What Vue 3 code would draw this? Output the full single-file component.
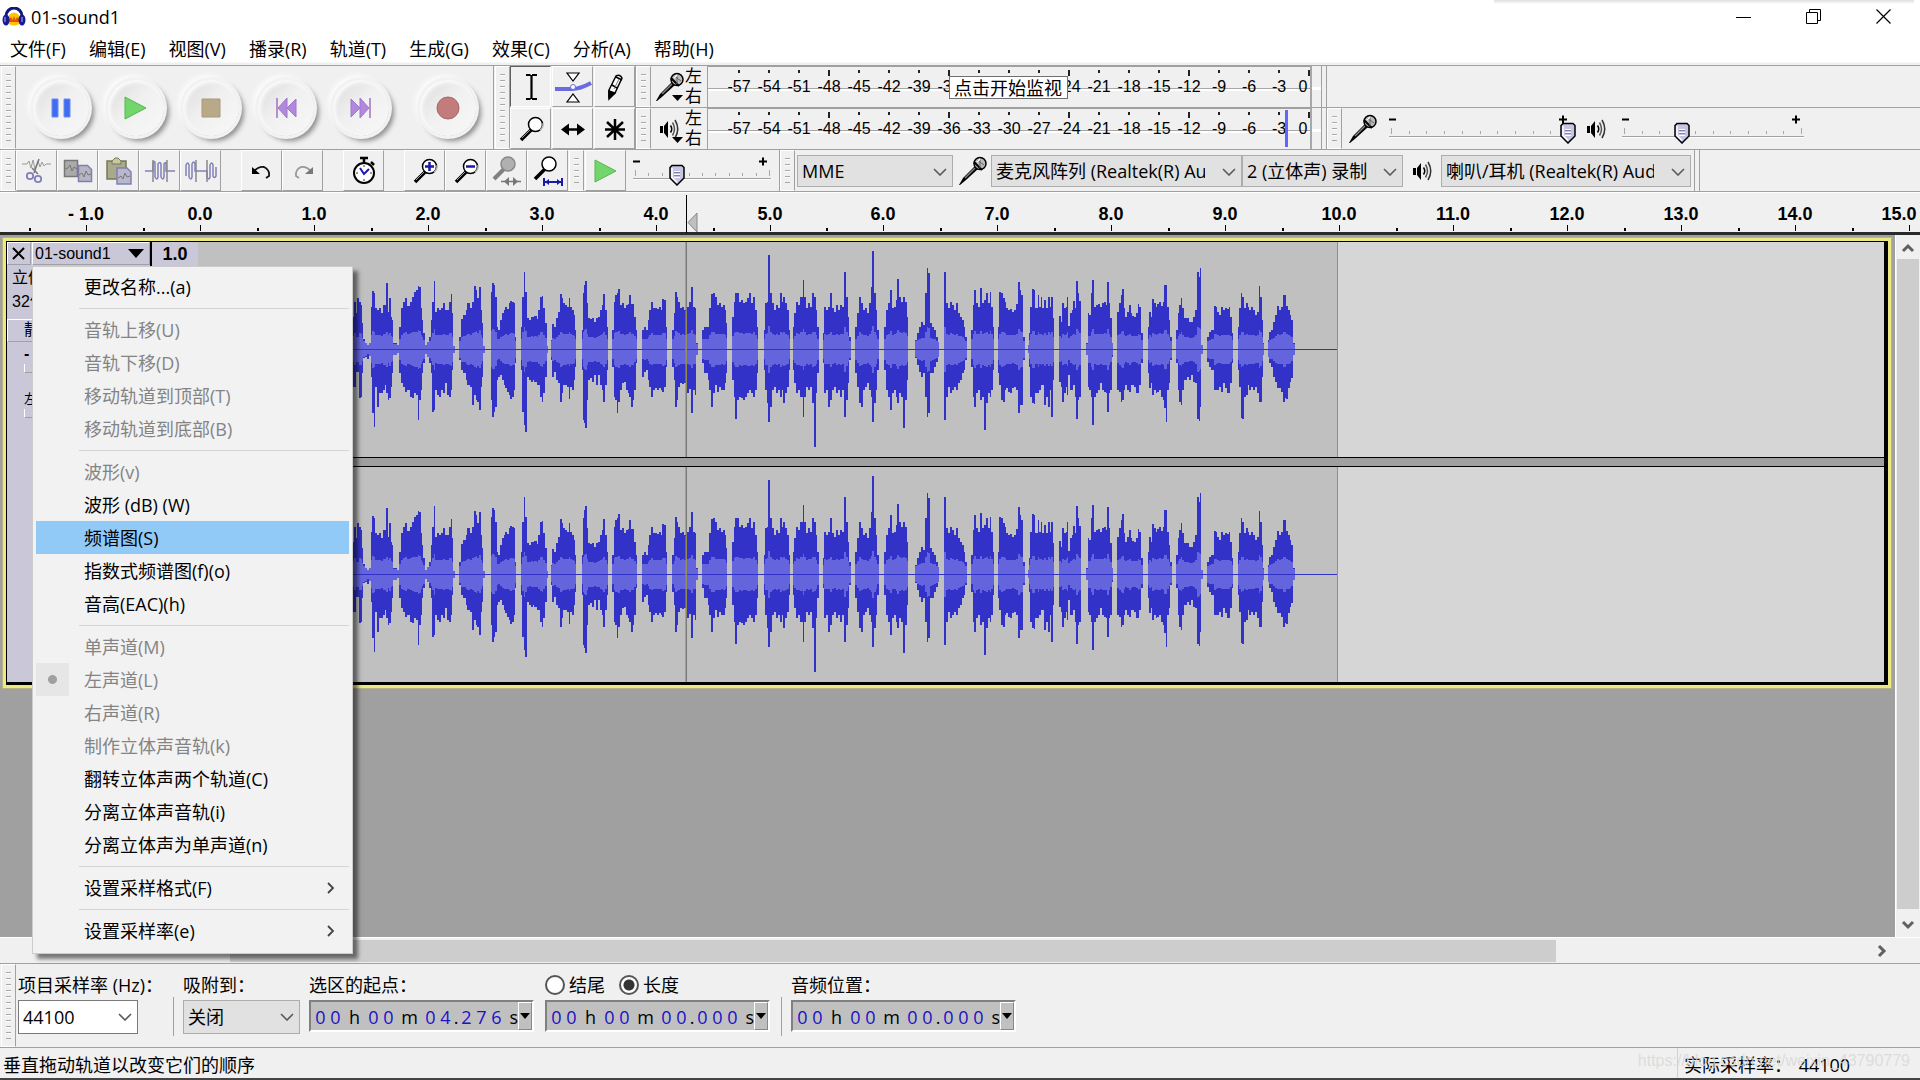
<template>
  <div class="window">
    <svg class="defs" aria-hidden="true">
      <symbol id="mic" viewBox="0 0 30 30">
        <path d="M1 29 L5 22 L17 10 L20 13 L8 24 L2 29z" fill="#000" />
        <path d="M7 22 L17 12" stroke="#888" stroke-width="1.5" />
        <circle cx="22" cy="7.500" r="6" fill="#bbb" stroke="#000" stroke-width="1.5" />
        <path d="M16 6 L24 14" stroke="#000" stroke-width="2" />
        <path d="M19 4 L26 9 M22 3 L22 12" stroke="#666" stroke-width="1" />
        <path d="M19 6 L22 3" stroke="#fff" stroke-width="1.5" />
      </symbol>
      <symbol id="speaker" viewBox="0 0 20 20">
        <path d="M1 7h3v7H1z M5 7l4-5v17l-4-5z" fill="#000" />
        <path d="M11.500 6.500q2.500 3.500 0 7" fill="none" stroke="#000" stroke-width="1.500" />
        <path d="M13.500 3.500q4 6.500 0 13" fill="none" stroke="#555" stroke-width="1.500" />
        <path d="M16 1q5.500 9 0 18" fill="none" stroke="#333" stroke-width="1.500" />
      </symbol>
      <symbol id="thumb" viewBox="0 0 18 22">
        <path d="M4 1.500h10l2 2v10.500l-7 7l-7-7v-10.500z" fill="#c6c6e4" stroke="#000" stroke-width="1.500" />
        <path d="M4 4v9.500l5 5" fill="none" stroke="#fff" stroke-width="1.500" />
        <path d="M6 7.500h6M6 10.500h6M6 13.500h6" stroke="#fff" />
        <path d="M6 8.500h6M6 11.500h6" stroke="#8080a8" />
      </symbol>
      <symbol id="lens" viewBox="0 0 28 28">
        <path d="M4 25l11-11" stroke="#000" stroke-width="3.500" />
        <path d="M5 23l8-8" stroke="#999" stroke-width="1" />
        <circle cx="18.500" cy="9.500" r="7" fill="#fff" stroke="#000" stroke-width="1.500" />
        <path d="M23 15a7 7 0 0 0 3-7" fill="none" stroke="#bbb" stroke-width="1.500" />
      </symbol>
      <symbol id="chevron" viewBox="0 0 14 8">
        <path d="M1 1l6 6l6-6" fill="none" stroke="#5a5a5a" stroke-width="1.600" />
      </symbol>
      <symbol id="play" viewBox="0 0 24 24">
        <path d="M1 1l21 11l-21 11z" fill="#72d66b" stroke="#5ab455" stroke-width="1" />
      </symbol>
    </svg>

    <header class="titlebar">
      <svg class="logo" width="24" height="20" viewBox="0 0 24 20">
        <path d="M4 12V9a8 8 0 0 1 16 0v3" fill="none" stroke="#14147a" stroke-width="3" />
        <path d="M7 8q5-5 10 0v9q-5 3-10 0z" fill="#ffc400" />
        <path d="M7 12l2-2 1.500 3L12 9l1.500 4L15 10l2 2v3H7z" fill="#f04a10" />
        <ellipse cx="4" cy="13" rx="3.500" ry="5.500" fill="#1a1a90" />
        <ellipse cx="20" cy="13" rx="3.500" ry="5.500" fill="#1a1a90" />
        <path d="M3 10v5M20 10v5" stroke="#7c7ce8" stroke-width="1.500" />
      </svg>
      <h1>01-sound1</h1>
      <div class="edge-shadow"></div>
      <div class="window-buttons">
        <button aria-label="最小化">
          <svg width="16" height="16"><path d="M0 8.500h15" stroke="#000" /></svg>
        </button>
        <button aria-label="还原">
          <svg width="16" height="16" fill="none" stroke="#000"><path d="M.500 3.500h11v11h-11zM3.500 3.500v-3h11v11h-3" /></svg>
        </button>
        <button aria-label="关闭窗口">
          <svg width="16" height="16"><path d="M.500.500l14 14M14.500.500l-14 14" stroke="#000" stroke-width="1.200" /></svg>
        </button>
      </div>
    </header>

    <nav class="menubar">
      <button v-for="item in mainMenu" :key="item">{{ item }}</button>
    </nav>

    <div class="dock">
      <div class="dock-upper">
        <section class="toolbar transport">
          <div class="grip"></div>
          <div class="transport-buttons">
            <button aria-label="暂停">
              <svg width="24" height="24"><path d="M3 3h6v18H3zM15 3h6v18h-6z" fill="#3f6cf0" stroke="#6a8cf4" /></svg>
            </button>
            <button aria-label="播放"><svg width="24" height="24"><use href="#play" /></svg></button>
            <button aria-label="停止">
              <svg width="24" height="24"><path d="M3 3h18v18H3z" fill="#b8a988" stroke="#a99a78" /></svg>
            </button>
            <button aria-label="跳到开头">
              <svg width="24" height="24"><path d="M3 2v20" stroke="#a070c8" stroke-width="1.500" /><path d="M13 2v20L4 12zM22 3v18l-9-9z" fill="#b088dc" stroke="#a076cc" /></svg>
            </button>
            <button aria-label="跳到结尾">
              <svg width="24" height="24"><path d="M21 2v20" stroke="#a070c8" stroke-width="1.500" /><path d="M11 2v20l9-10zM2 3v18l9-9z" fill="#b088dc" stroke="#a076cc" /></svg>
            </button>
            <button class="record" aria-label="录制">
              <svg width="24" height="24"><circle cx="12" cy="12" r="11" fill="#c27c7c" stroke="#a86464" /></svg>
            </button>
          </div>
        </section>

        <section class="toolbar tools">
          <div class="grip"></div>
          <div class="tool-grid">
            <button class="tool pressed" aria-label="选择工具">
              <svg width="28" height="28"><path d="M9 2h4.500M15 2h5M9 26h4.500M15 26h5M14.500 2v24" stroke="#000" stroke-width="2.200" fill="none" /></svg>
            </button>
            <button class="tool" aria-label="包络工具">
              <svg width="38" height="32">
                <path d="M1 18h17q8 0 19-6" fill="none" stroke="#6b6be0" stroke-width="4" />
                <path d="M13 2h12l-6 8zM13 31h12l-6-8z" fill="#fff" stroke="#000" stroke-width="1.200" />
                <circle cx="19" cy="16" r="2.500" fill="#fff" stroke="#6b6be0" />
              </svg>
            </button>
            <button class="tool" aria-label="绘制工具">
              <svg width="28" height="28">
                <path d="M8 17l7-14q4-2 6 2l-7 15-6 4z" fill="#fff" stroke="#000" stroke-width="1.500" />
                <path d="M8 18l6 2-6 6zM15 4l6 3M11 12l5 3" stroke="#000" stroke-width="1.500" fill="#000" />
                <path d="M13 16l5-10" stroke="#777" />
              </svg>
            </button>
            <button class="tool" aria-label="缩放工具"><svg width="28" height="28"><use href="#lens" /></svg></button>
            <button class="tool" aria-label="时间移动工具">
              <svg width="28" height="28"><path d="M6 14.500h16" stroke="#000" stroke-width="2.500" /><path d="M2 14.500l8-6v12zM26 14.500l-8-6v12z" /></svg>
            </button>
            <button class="tool" aria-label="多功能工具">
              <svg width="28" height="28"><path d="M14 4v21M4 14.500h20M6 7l16 15M22 7L6 22" stroke="#000" stroke-width="2.500" /></svg>
            </button>
          </div>
        </section>

        <div class="meter-rows">
          <div class="meter-row" v-for="meter in meters" :key="meter.icon">
            <section class="toolbar meter">
              <div class="grip"></div>
              <button class="meter-menu" :aria-label="meter.label">
                <svg v-if="meter.icon === 'mic'" width="30" height="30"><use href="#mic" /></svg>
                <svg v-else class="meter-speaker" width="20" height="20"><use href="#speaker" /></svg>
                <svg class="arrow" width="12" height="6"><path d="M0 0h11l-5.500 6z" /></svg>
              </button>
              <div class="channels"><span>左</span><span>右</span></div>
              <div class="scale">
                <span v-for="db in dbMarks" :key="db" :class="{ major: db % 12 === 0 }">{{ db }}</span>
                <i v-if="meter.peak" class="peak"></i>
                <div v-if="meter.tip" class="tip">{{ meter.tip }}</div>
              </div>
              <div class="clip-box"></div>
            </section>
            <section v-if="meter.icon === 'speaker'" class="toolbar mixer">
              <div class="grip"></div>
              <template v-for="s in mixerSliders" :key="s.label">
                <svg v-if="s.icon === 'mic'" class="mixer-icon" width="30" height="30"><use href="#mic" /></svg>
                <svg v-else class="mixer-icon narrow" width="20" height="20"><use href="#speaker" /></svg>
                <label class="slider">
                  <svg :width="s.width" height="41">
                    <path d="M9 11.500h7" stroke="#000" stroke-width="2" />
                    <path :d="`M${s.plus - 4} 11.500h8M${s.plus} 7.500v8`" stroke="#000" stroke-width="2" />
                    <path v-for="n in 11" :key="n" :d="tick(s, n)" stroke="#a8a8a8" />
                    <path :d="`M9 28.500H${s.end + 3}`" stroke="#a0a0a0" />
                    <path :d="`M9 29.500H${s.end + 3}`" stroke="#fff" />
                    <use href="#thumb" :x="s.thumb - 9" y="14" width="18" height="22" />
                  </svg>
                  <input type="range" min="0" max="100" :value="s.value" :aria-label="s.label">
                </label>
              </template>
            </section>
          </div>
        </div>
      </div>

      <div class="dock-lower">
        <section class="toolbar edit">
          <div class="grip"></div>
          <button class="tool" aria-label="剪切">
            <svg width="30" height="28" fill="none">
              <path d="M0 7h5l2-3 2 7 2-8 2 9 3-8 2 6 2-5 2 4 2-2h5" stroke="#999" />
              <path d="M17 2l-5 14M10 11l6 6" stroke="#777" stroke-width="1.500" />
              <circle cx="8" cy="19" r="3.200" stroke="#8080b8" stroke-width="1.800" />
              <circle cx="16" cy="22" r="3.200" stroke="#8080b8" stroke-width="1.800" />
            </svg>
          </button>
          <button class="tool" aria-label="复制">
            <svg width="30" height="26">
              <path d="M1.500 2.500h13v16h-13z" fill="#aaa" stroke="#777" stroke-width="1.500" />
              <path d="M2 11l3-1 2-3 2 6 2-4 3 2" stroke="#777" fill="none" />
              <path d="M15.500 7.500h9l4 4v12h-13z" fill="#b5b5c4" stroke="#8080b0" stroke-width="1.500" />
              <path d="M16 17l3-2 2 4 2-6 2 4 3-1" stroke="#777" fill="none" />
            </svg>
          </button>
          <button class="tool" aria-label="粘贴">
            <svg width="28" height="28">
              <path d="M2 4h19v18H2z" fill="#a9a98c" stroke="#77775c" stroke-width="1.500" />
              <path d="M7 7V4l3-3h3l3 3v3z" fill="#c9c9a0" stroke="#77775c" />
              <path d="M12 11h10l4 4v12H12z" fill="#b8b8cc" stroke="#8080b0" stroke-width="1.500" />
              <path d="M13 21l3-2 2 3 2-6 2 4 3-1" stroke="#777" fill="none" />
            </svg>
          </button>
          <button class="tool" aria-label="修剪">
            <svg width="32" height="24" fill="none">
              <path d="M1 12h8v-8q2-3 2 0v14q2 4 3 0V5q2-3 3 0v13q2 4 3 0V5q2-3 2 0v7h9" stroke="#8080b8" stroke-width="1.500" />
              <path d="M9 1v22M23 1v22" stroke="#888" stroke-width="1.500" />
            </svg>
          </button>
          <button class="tool" aria-label="静音">
            <svg width="32" height="24" fill="none">
              <path d="M1 17V6q2-4 3 0v12q2 4 3 0V5q2-4 3 0v7h12v6q2 4 3 0V6q2-4 3 0v11q1 3 3 0V8" stroke="#8080b8" stroke-width="1.500" />
              <path d="M11 1v22M22 1v22" stroke="#888" stroke-width="1.500" />
            </svg>
          </button>
          <i class="spacer"></i>
          <button class="tool" aria-label="撤销">
            <svg width="24" height="20"><path d="M4 10q5-5 10-4 6 3 5 9l-3 2" fill="none" stroke="#111" stroke-width="1.800" /><path d="M2 6v7h8z" /></svg>
          </button>
          <button class="tool" aria-label="重做">
            <svg width="24" height="20"><path d="M20 10q-5-5-10-4-6 3-5 9l3 2" fill="none" stroke="#999" stroke-width="1.800" /><path d="M22 6v7h-8z" fill="#777" /></svg>
          </button>
          <i class="spacer"></i>
          <button class="tool" aria-label="同步锁定">
            <svg width="26" height="30">
              <path d="M13 1v5M9 2h8M20 6l3 3" stroke="#000" stroke-width="2.500" />
              <circle cx="13" cy="17" r="10" fill="#fff" stroke="#000" stroke-width="2" />
              <path d="M13 9v2M13 23v2M5 17h2M19 17h2" stroke="#333" />
              <path d="M9 12l4 6 5-5" fill="none" stroke="#1a1ab0" stroke-width="2" />
            </svg>
          </button>
          <i class="spacer"></i>
          <button class="tool" aria-label="放大">
            <svg width="28" height="28"><use href="#lens" /><path d="M14 9.500h9M18.500 5v9" stroke="#1a1aa8" stroke-width="2.500" /></svg>
          </button>
          <button class="tool" aria-label="缩小">
            <svg width="28" height="28"><use href="#lens" /><path d="M14 9.500h9" stroke="#1a1aa8" stroke-width="2.500" /></svg>
          </button>
          <button class="tool" aria-label="适应选区">
            <svg width="30" height="32">
              <path d="M2 24l11-11" stroke="#808080" stroke-width="4" />
              <circle cx="16" cy="9" r="7" fill="#b0b0b0" stroke="#888" stroke-width="1.500" />
              <path d="M9 26.500h20" stroke="#777" stroke-width="1.500" />
              <path d="M17 22v9l-5-4.500zM21 22v9l5-4.500z" fill="#777" />
            </svg>
          </button>
          <button class="tool" aria-label="适应项目">
            <svg width="30" height="32">
              <path d="M2 24l11-11" stroke="#000" stroke-width="3.500" />
              <circle cx="16" cy="9" r="7" fill="#fff" stroke="#000" stroke-width="1.500" />
              <path d="M11 27h18M11 23v8M29 23v8" stroke="#1a1aa8" stroke-width="2" />
              <path d="M12 27l4-3v6zM28 27l-4-3v6z" fill="#1a1aa8" />
            </svg>
          </button>
        </section>

        <section class="toolbar play-speed">
          <div class="grip"></div>
          <button class="tool" aria-label="以指定速度播放"><svg width="24" height="24"><use href="#play" /></svg></button>
          <label class="slider">
            <svg :width="speed.width" height="41">
              <path d="M7 11.500h7" stroke="#000" stroke-width="2" />
              <path :d="`M${speed.plus - 4} 11.500h8M${speed.plus} 7.500v8`" stroke="#000" stroke-width="2" />
              <path v-for="n in 11" :key="n" :d="tick(speed, n)" stroke="#a8a8a8" />
              <path :d="`M7 28.500H${speed.end + 2}`" stroke="#a0a0a0" />
              <path :d="`M7 29.500H${speed.end + 2}`" stroke="#fff" />
              <use href="#thumb" :x="speed.thumb - 9" y="14" width="18" height="22" />
            </svg>
            <input type="range" min="0" max="100" :value="speed.value" :aria-label="speed.label">
          </label>
        </section>

        <section class="toolbar devices">
          <div class="grip"></div>
          <span class="combo host">
            <select aria-label="音频主机"><option>MME</option></select>
            <svg width="14" height="8"><use href="#chevron" /></svg>
          </span>
          <svg class="device-icon" width="30" height="30"><use href="#mic" /></svg>
          <span class="combo input-device">
            <select aria-label="录制设备"><option>麦克风阵列 (Realtek(R) Audio)</option></select>
            <svg width="14" height="8"><use href="#chevron" /></svg>
          </span>
          <span class="combo input-channels">
            <select aria-label="录制声道"><option>2 (立体声) 录制</option></select>
            <svg width="14" height="8"><use href="#chevron" /></svg>
          </span>
          <svg class="device-icon narrow" width="20" height="20"><use href="#speaker" /></svg>
          <span class="combo output-device">
            <select aria-label="播放设备"><option>喇叭/耳机 (Realtek(R) Audio)</option></select>
            <svg width="14" height="8"><use href="#chevron" /></svg>
          </span>
        </section>
      </div>
    </div>

    <div class="timeline">
      <svg width="100%" height="40">
        <g v-for="mark in timeMarks" :key="mark.x">
          <rect :x="mark.x" :y="mark.label ? 32 : 35" :width="mark.label ? 1 : 2" :height="mark.label ? 6 : 3" fill="#000" />
          <text v-if="mark.label" :x="mark.textX" y="27">{{ mark.label }}</text>
        </g>
        <path d="M686.500 2v38" stroke="#000" />
        <path d="M697 20v19l-9-9.500z" fill="#c0c0c0" stroke="#888" />
      </svg>
    </div>

    <main class="workspace">
      <div class="track-area">
        <article class="track">
          <div class="track-body">
            <aside class="track-panel">
              <div class="track-head">
                <button class="close" aria-label="关闭轨道">
                  <svg width="14" height="14"><path d="M1 1l11 11M12 1L1 12" stroke="#000" stroke-width="2" /></svg>
                </button>
                <button class="name">01-sound1 <svg width="16" height="9"><path d="M0 0h16l-8 9z" /></svg></button>
              </div>
              <p class="format">立体声<br>32位浮点</p>
              <div class="mute"><button>静音</button></div>
              <div class="gain"><span>-</span><i></i></div>
              <div class="gain pan"><span>左</span><i></i></div>
            </aside>
            <div class="v-ruler"><span>1.0</span></div>
            <div class="waves">
              <div v-for="channel in 2" :key="channel" class="channel">
                <svg width="1139" height="215" viewBox="594 36 3417 645">
                  <path :d="peakPath" fill="#3232c8" shape-rendering="crispEdges" />
                  <path :d="rmsPath" fill="#6464dc" shape-rendering="crispEdges" />
                  <rect x="594" y="357" width="3417" height="3" fill="#3232c8" />
                  <rect x="2057" y="36" width="3" height="645" fill="#5a5a5a" />
                  <rect x="2057" y="243" width="3" height="237" fill="#b4aa3c" />
                  <rect x="2057" y="315" width="3" height="87" fill="#8c8c64" />
                </svg>
              </div>
            </div>
          </div>
        </article>
      </div>
      <div class="v-scroll">
        <svg width="14" height="12"><path d="M2 9l5-5l5 5" fill="none" stroke="#606060" stroke-width="3" /></svg>
        <i></i>
        <svg width="14" height="12"><path d="M2 3l5 5l5-5" fill="none" stroke="#606060" stroke-width="3" /></svg>
      </div>
    </main>
    <div class="h-scroll">
      <i></i>
      <svg width="12" height="14"><path d="M3 2l5 5l-5 5" fill="none" stroke="#606060" stroke-width="3" /></svg>
    </div>

    <section class="selection-bar">
      <div class="grip"></div>
      <div class="field rate">
        <label for="rate">项目采样率 (Hz)：</label>
        <span class="combo editable">
          <input id="rate" type="text" value="44100">
          <svg width="14" height="8"><use href="#chevron" /></svg>
        </span>
      </div>
      <i class="divider"></i>
      <div class="field snap">
        <label for="snap">吸附到：</label>
        <span class="combo">
          <select id="snap"><option>关闭</option></select>
          <svg width="14" height="8"><use href="#chevron" /></svg>
        </span>
      </div>
      <template v-for="time in timeFields" :key="time.id">
        <i v-if="time.id === 'position'" class="divider"></i>
        <div class="field">
          <div v-if="time.id === 'end'" class="radios">
            <label><input type="radio" name="mode" value="end" v-model="mode">结尾</label>
            <label><input type="radio" name="mode" value="length" v-model="mode">长度</label>
          </div>
          <span v-else class="caption">{{ time.label }}</span>
          <div class="time-control">
            <span v-for="(ch, i) in time.value" :key="i" :class="charClass(ch)">{{ ch }}</span>
            <button :aria-label="time.label + '格式'"><svg width="10" height="6"><path d="M0 0h10l-5 6z" /></svg></button>
          </div>
        </div>
      </template>
    </section>

    <footer class="statusbar">
      <span class="hint">垂直拖动轨道以改变它们的顺序</span>
      <span class="actual-rate">实际采样率： <b>44100</b></span>
      <span class="watermark">https://blog.csdn.net/weixin_43790779</span>
    </footer>

    <div class="track-menu" role="menu">
      <template v-for="(group, g) in trackMenu" :key="g">
        <hr v-if="g > 0">
        <button
          v-for="item in group"
          :key="item.text"
          role="menuitem"
          :disabled="item.off"
          :class="{ active: item.active, checked: item.checked }"
        >
          <span class="mark"></span>{{ item.text }}
          <svg v-if="item.sub" width="8" height="12"><path d="M1 1l5 5l-5 5" fill="none" stroke="#444" stroke-width="1.800" /></svg>
        </button>
      </template>
    </div>
  </div>
</template>

<script setup>
import { ref } from 'vue';

const mainMenu = ['文件(F)', '编辑(E)', '视图(V)', '播录(R)', '轨道(T)', '生成(G)', '效果(C)', '分析(A)', '帮助(H)'];

const meters = [
  { icon: 'mic', label: '录制电平', tip: '点击开始监视' },
  { icon: 'speaker', label: '播放电平', peak: true }
];

const dbMarks = Array.from({ length: 20 }, (_, i) => i * 3 - 57);

const mixerSliders = [
  { icon: 'mic', label: '录制音量', width: 200, start: 11, end: 188, thumb: 188, plus: 183, value: 100 },
  { icon: 'speaker', label: '播放音量', width: 200, start: 11, end: 188, thumb: 69, plus: 183, value: 33 }
];
const speed = { label: '播放速度', width: 153, start: 9, end: 143, thumb: 51, plus: 137, value: 31 };

// The end ticks are a little taller than the inner ones
const tick = (s, n) => {
  const x = Math.round(s.start + ((s.end - s.start) * (n - 1)) / 10) + 0.5;
  return `M${x} ${n === 1 || n === 11 ? 20 : 23}V26`;
};

// One label per second, a small tick on each half second
const timeMarks = [];
for (let t = -1.5; t <= 15; t += 0.5) {
  const x = Math.round(200 + t * 113.9);
  const whole = Number.isInteger(t);
  const text = t < 0 ? '- ' + (-t).toFixed(1) : t.toFixed(1);
  timeMarks.push({ x, label: whole ? text : '', textX: t === 15 ? x - 10 : x });
}

const mode = ref('length');

const timeFields = [
  { id: 'start', label: '选区的起点：', value: '00h00m04.276s' },
  { id: 'end', label: '长度', value: '00h00m00.000s' },
  { id: 'position', label: '音频位置：', value: '00h00m00.000s' }
];

const charClass = (ch) => {
  if (ch >= '0' && ch <= '9') return 'digit';
  return ch === '.' ? 'dot' : 'unit-' + ch;
};

const trackMenu = [
  [{ text: '更改名称...(a)' }],
  [
    { text: '音轨上移(U)', off: true },
    { text: '音轨下移(D)', off: true },
    { text: '移动轨道到顶部(T)', off: true },
    { text: '移动轨道到底部(B)', off: true }
  ],
  [
    { text: '波形(v)', off: true },
    { text: '波形 (dB) (W)' },
    { text: '频谱图(S)', active: true },
    { text: '指数式频谱图(f)(o)' },
    { text: '音高(EAC)(h)' }
  ],
  [
    { text: '单声道(M)', off: true },
    { text: '左声道(L)', off: true, checked: true },
    { text: '右声道(R)', off: true },
    { text: '制作立体声音轨(k)', off: true },
    { text: '翻转立体声两个轨道(C)' },
    { text: '分离立体声音轨(i)' },
    { text: '分离立体声为单声道(n)' }
  ],
  [{ text: '设置采样格式(F)', sub: true }],
  [{ text: '设置采样率(e)', sub: true }]
];

// Waveform blocks: x, top and bottom of each step, three units to a pixel, zero line at 358.
// Each row is one burst and closes at its last x.
const axis = 358;
const blocks = [
  {
    base: 1050,
    bursts: [
      '0,250,440 6,260,470 12,215,470 18,250,425 22,205,425 26,215,505 32,225,500 37,280,430 40,328,385 46,338,380 52,345,388 57,338,378 62',
      '62,230,440 66,182,550 71,190,590 76,235,470 81,240,530 86,235,490 92,250,490 98,225,480 104,225,465 108,158,490 113,245,510 118,205,505 122,260,470 126,270,430 130,340,375 140,346,370 146,320,380 148',
      '148,290,430 152,235,460 160,215,470 166,203,485 171,228,480 180,215,500 187,200,505 193,185,490 198,180,495 203,168,570 208,172,510 212,235,480 216,270,430 220,310,400 224,345,373 230,335,380 236,320,400 242',
      '242,270,430 246,215,545 251,153,540 256,245,480 262,235,495 268,240,500 274,235,480 279,220,490 284,240,460 290,240,495 296,215,500 302,193,480 306,250,420 310,348,368 315',
      '328,320,390 333,268,420 340,255,430 347,240,450 352,220,465 360,235,470 367,215,525 372,167,495 377,180,510 382,205,515 387,172,540 392,240,470 396,280,440 400,348,370 404',
      '422,185,510 427,158,560 432,165,545 436,200,530 441,290,450 445,300,440 450,270,435 456,250,450 462,240,465 466,230,475 471,238,485 476,220,495 481,212,508 486,216,500 491,220,480 495,320,400 497',
      '513,290,420 517,200,545 521,127,585 526,185,607 530,265,440 536,270,450 542,260,455 548,262,450 553,258,455 560,268,465 565,240,465 570,200,500 575,198,517 580,235,490 586,280,440 590,348,370 594',
      '603,330,390 607,282,440 613,290,425 618,265,450 623,245,460 630,193,517 635,205,490 640,218,465 645,225,465 650,230,470 656,203,508 660,230,470 666,240,480 672,255,450 676,300,410 679',
      '695,300,420 698,190,570 702,165,580 706,153,595 710,220,510 714,265,450 720,268,445 726,265,455 732,275,435 738,265,465 743,260,435 749,240,465 755,225,480 760,193,517 765,240,465 770,290,420 773',
      '787,300,410 791,215,500 796,195,510 801,190,550 805,178,515 809,225,480 816,220,460 822,235,455 828,225,480 833,222,490 838,195,500 842,222,530 848,222,510 853,260,480 857,300,400 862',
      '877,300,440 883,292,425 889,300,420 894,270,450 898,240,470 903,217,500 908,235,480 914,235,475 920,238,480 926,232,475 932,240,480 937,208,485 942,210,470 947,290,410 952',
      '967,300,410 972,250,450 976,185,530 981,200,510 985,215,470 990,235,460 996,230,462 1002,240,460 1007,242,480 1012,230,490 1017,215,478 1022,172,548 1028,230,480 1034,235,495 1038,340,375 1043',
      '1057,300,400 1062,292,430 1067,292,430 1073,290,450 1078,235,480 1083,193,530 1088,190,490 1094,200,465 1100,225,485 1106,220,470 1112,230,480 1118,225,480 1124,240,460 1128,280,430 1132',
      '1147,260,450 1151,215,500 1156,190,567 1161,190,510 1166,215,500 1172,210,505 1178,220,510 1184,215,500 1190,205,490 1196,190,480 1202,220,490 1208,200,500 1214,240,480 1220,290,430 1225'
    ]
  },
  {
    base: 2250,
    bursts: [
      '41,300,420 45,220,480 51,215,520 55,76,577 60,190,530 66,220,480 72,240,470 78,225,490 84,235,480 90,190,500 95,215,480 100,200,520 106,220,490 111,240,470 116,300,420 120',
      '129,290,420 133,250,460 139,215,490 145,225,480 151,200,500 158,150,560 163,200,500 169,235,470 175,220,480 181,230,470 187,190,520 192,200,650 197,240,490 202,290,430 207',
      '219,310,400 223,230,490 229,240,480 235,230,530 240,190,510 246,235,480 252,245,470 258,225,490 264,240,480 270,225,500 276,230,480 283,125,560 288,200,510 293,260,460 298,320,390 302',
      '315,290,430 320,250,470 326,200,520 332,220,530 338,240,480 344,235,470 350,250,460 356,220,480 362,170,500 367,64,575 372,190,520 377,240,480 382,300,420 387',
      '402,290,420 407,240,480 413,220,500 419,180,540 425,235,490 431,230,480 437,210,500 442,147,520 447,200,490 453,215,500 459,200,595 464,215,510 470,260,450 475',
      '495,330,385 501,310,405 507,290,425 513,275,440 519,285,430 524,190,500 530,115,560 535,130,550 540,280,430 546,290,430 552,300,410 558,320,395 564,335,380 568',
      '582,125,570 587,220,500 593,235,470 599,215,490 605,225,480 611,240,470 617,220,480 623,250,460 629,260,450 635,270,430 641,290,420 646,320,390 650',
      '663,300,410 668,225,500 673,180,530 679,220,490 685,230,480 691,173,510 697,220,500 702,210,600 707,190,520 713,220,490 719,185,500 724,230,480 729,290,420 733'
    ]
  },
  {
    base: 3000,
    bursts: [
      '-6,290,430 -2,185,465 4,190,510 9,203,515 14,215,480 19,235,475 25,240,485 31,238,490 37,245,475 43,240,470 49,222,480 54,155,550 59,180,525 64,195,525 69,320,390 74',
      '83,345,370 87,310,410 91,230,500 96,177,520 102,180,522 106,235,490 113,195,490 117,230,480 123,200,465 127,235,465 133,210,525 138,235,500 143,200,530 149,230,480 154,200,562 159,265,450 163',
      '177,258,455 182,275,470 187,220,515 192,235,490 197,230,470 201,200,495 205,288,435 210,250,480 215,240,480 219,212,465 224,235,500 228,153,567 233,188,510 238,213,500 244',
      '258,340,375 263,250,470 268,255,480 272,190,500 276,150,585 281,230,500 288,225,490 294,222,480 300,230,460 305,218,480 311,215,485 317,225,490 321,155,545 326,220,490 331,265,480 336,340,380 340',
      '352,245,480 357,220,485 362,195,517 367,177,510 371,235,480 376,260,465 381,245,480 388,225,485 392,250,465 397,258,465 403,260,470 409,250,490 413,222,490 418,232,465 424,310,400 429',
      '443,290,430 447,245,475 452,262,460 457,208,495 462,220,480 467,232,490 472,222,485 478,215,480 484,228,500 489,215,510 493,165,535 498,165,577 502,230,480 506,270,460 511,320,390 515',
      '529,300,400 534,250,480 538,225,515 543,203,525 547,235,480 552,265,450 560,265,440 566,275,450 573,275,435 579,262,455 586,240,460 591,127,567 596,140,572 600,113,530 604,345,373 609',
      '622,320,395 628,305,410 634,300,420 641,227,480 647,230,480 652,245,480 658,255,470 664,232,485 670,240,460 676,235,475 681,237,488 687,232,488 691,260,460 696,310,400 700',
      '713,290,420 717,235,470 722,190,565 727,200,567 732,235,500 738,218,495 743,232,465 748,240,480 754,232,470 760,240,480 766,255,470 771,245,490 776,168,515 781,200,517 785,270,440 790,340,375 793',
      '803,330,380 808,305,400 814,300,410 820,275,440 826,255,455 832,228,475 838,240,475 843,230,485 848,195,515 854,195,505 858,228,508 863,240,475 869,255,455 874,270,445 880,340,375 884'
    ]
  }
];

const steps = blocks.flatMap(({ base, bursts }) =>
  bursts.map((row) => row.split(' ').map((p) => {
    const [x, top, bottom] = p.split(',').map(Number);
    return { x: x + base, up: axis - top, down: bottom - axis };
  }))
);

// Outline of one burst: along the top edge, then back along the bottom one
const outline = (points, upper, lower) => {
  let top = '';
  let bottom = '';
  for (let i = 0; i < points.length - 1; i++) {
    const p = points[i];
    const next = points[i + 1].x;
    top += `L${p.x} ${axis - upper(p)}H${next}`;
    bottom = `L${next} ${axis + lower(p)}H${p.x}` + bottom;
  }
  return `M${points[0].x} ${axis}${top}${bottom}z`;
};

const rms = (p) => Math.min(p.up, p.down, 18 + 0.21 * Math.min(p.up, p.down + 30));

const peakPath = steps.map((s) => outline(s, (p) => p.up, (p) => p.down)).join('');
const rmsPath = steps.map((s) => outline(s, rms, rms)).join('');
</script>

<style>
body {
  margin: 0;
  overflow: hidden;
}
</style>

<style scoped>
.window {
  position: relative;
  display: flex;
  flex-direction: column;
  height: 100vh;
  box-sizing: border-box;
  border-bottom: 2px solid #444;
  background: #f0f0f0;
  color: #000;
  font: 18px/24px "Open Sans", "Noto Sans CJK SC", sans-serif;
}

.defs {
  position: absolute;
  width: 0;
  height: 0;
}

button,
input,
select {
  margin: 0;
  padding: 0;
  border: 0;
  background: none;
  color: inherit;
  font: inherit;
}

svg {
  display: block;
  flex: none;
}

/* title and menu */
.titlebar {
  position: relative;
  display: flex;
  align-items: center;
  height: 35px;
  padding-left: 2px;
  background: #fff;
}

.titlebar h1 {
  flex: 1;
  margin: 0 0 0 5px;
  padding-bottom: 2px;
  font-size: 18px;
  font-weight: 400;
}

.logo {
  margin-bottom: 1px;
}

.edge-shadow {
  position: absolute;
  top: 0;
  right: 6px;
  width: 420px;
  height: 4px;
  background: linear-gradient(#ddd, #fff);
}

.window-buttons {
  display: flex;
  padding: 0 1px 2px 0;
}

.window-buttons button {
  display: flex;
  justify-content: center;
  align-items: center;
  width: 70px;
  height: 32px;
}

.menubar {
  display: flex;
  align-items: flex-start;
  gap: 23px;
  height: 30px;
  padding-left: 10px;
  border-bottom: 1px solid #a0a0a0;
  background: linear-gradient(#fff 27px, #f0f0f0 28px);
  line-height: 28px;
}

/* toolbars */
.dock-upper,
.dock-lower,
.toolbar,
.meter-row {
  display: flex;
}

.dock-upper {
  height: 84px;
}

.dock-lower {
  height: 41px;
  border-bottom: 1px solid #a0a0a0;
}

.grip {
  flex: none;
  box-sizing: border-box;
  width: 15px;
  border: 1px solid #fff;
  border-right-color: #a0a0a0;
  background: repeating-linear-gradient(#a8a8a8 0 1px, #fff 1px 2px, #f0f0f0 2px 6px) content-box;
  padding: 7px 4px;
}

.transport,
.tools {
  box-sizing: border-box;
  padding-left: 1px;
  border-bottom: 1px solid #a0a0a0;
}

.transport {
  width: 494px;
  border-right: 1px solid #a0a0a0;
}

.transport-buttons {
  display: flex;
  align-items: center;
  gap: 19px;
  padding-left: 17px;
}

.transport-buttons button {
  display: flex;
  justify-content: center;
  align-items: center;
  width: 56px;
  height: 56px;
  border-radius: 50%;
  background: linear-gradient(135deg, #dadada, #f0f0f0 45%, #f8f8f8);
  box-shadow: inset 2px 2px 4px #fff, 0 0 0 3px #f2f2f2, 4px 4px 5px 1px #8e8e8e, -4px -4px 6px #fff;
}

.transport-buttons .record {
  margin-left: 12px;
}

.tool {
  display: flex;
  justify-content: center;
  align-items: center;
  flex: none;
  box-sizing: border-box;
  width: 41px;
  height: 41px;
  border: 1px solid #a0a0a0;
  border-top-color: #fff;
  border-left-color: #fff;
}

.tool.pressed {
  border-color: #606060 #fff #fff #606060;
}

.tool-grid {
  display: grid;
  grid-template-columns: repeat(3, 41px);
  gap: 1px;
  width: 125px;
  border-right: 1px solid #a0a0a0;
}

.spacer {
  width: 20px;
}

.meter-rows {
  flex: 1;
}

.meter-row {
  height: 41px;
  border-bottom: 1px solid #a0a0a0;
}

.meter-menu {
  display: flex;
  align-items: center;
  position: relative;
  width: 34px;
  padding-left: 4px;
}

.meter-speaker {
  margin-left: 4px;
}

.meter-menu .arrow {
  position: absolute;
  right: 1px;
  bottom: 6px;
}

.channels {
  display: flex;
  flex-direction: column;
  width: 22px;
  font-size: 17px;
  line-height: 20px;
}

.scale {
  position: relative;
  display: flex;
  flex: none;
  box-sizing: border-box;
  width: 603px;
  padding-left: 16px;
  border-left: 1px solid #a0a0a0;
  background: linear-gradient(#a0a0a0 1px, transparent 1px 22px, #a8a8a8 22px 23px, #fff 23px 25px, transparent 25px);
  font: 16px/20px "Liberation Sans", sans-serif;
}

.scale span {
  position: relative;
  flex: none;
  width: 30px;
  padding-top: 11px;
  text-align: center;
}

.scale span::before {
  content: "";
  position: absolute;
  top: 4px;
  left: 14px;
  width: 2px;
  height: 3px;
  background: #222;
}

.scale span.major::before {
  height: 6px;
}

.scale span:nth-child(20) {
  width: 18px;
}

.peak {
  position: absolute;
  top: 2px;
  bottom: 2px;
  right: 22px;
  width: 3px;
  background: #6464ff;
}

.tip {
  position: absolute;
  top: 10px;
  left: 241px;
  z-index: 1;
  padding: 0 5px 0 4px;
  border: 1px solid #707070;
  background: #fff;
  font: 18px/21px "Noto Sans CJK SC", sans-serif;
  white-space: nowrap;
}

.clip-box {
  box-sizing: border-box;
  width: 12px;
  border-left: 2px solid #a8a8a8;
  border-right: 1px solid #a0a0a0;
  background: linear-gradient(transparent 21px, #fff 21px 24px, transparent 24px);
}

.meter {
  padding-right: 4px;
  border-right: 1px solid #a0a0a0;
}

.mixer,
.devices {
  align-items: center;
}

.mixer .grip,
.devices .grip {
  align-self: stretch;
}

.mixer-icon {
  margin: 0 2px 0 6px;
}

.mixer-icon.narrow {
  margin: 0 7px 0 6px;
}

.slider {
  position: relative;
}

.slider input {
  position: absolute;
  inset: 0;
  width: 100%;
  opacity: 0;
}

.edit {
  padding-left: 1px;
}

.play-speed .grip {
  margin: 0 1px;
}

.play-speed {
  border-right: 1px solid #a0a0a0;
}

.devices {
  padding-right: 3px;
  border-right: 1px solid #a0a0a0;
  box-shadow: 4px 0 #f0f0f0, 5px 0 #a0a0a0;
}

.device-icon {
  margin: 0 3px 0 5px;
}

.device-icon.narrow {
  margin: 0 9px;
}

.combo {
  position: relative;
  display: flex;
  height: 32px;
}

.combo select,
.combo input {
  box-sizing: border-box;
  width: 100%;
  height: 100%;
  padding: 0 31px 0 4px;
  border: 1px solid #adadad;
  border-radius: 0;
  background: #e1e1e1;
  appearance: none;
}

.combo svg {
  position: absolute;
  top: 13px;
  right: 6px;
  pointer-events: none;
}

.combo.editable input {
  border-color: #7a7a7a;
  background: #fff;
}

.host {
  width: 156px;
  margin-left: 2px;
}

.input-device {
  width: 251px;
}

.input-channels {
  width: 161px;
}

.output-device {
  width: 250px;
}

.input-device select,
.output-device select {
  padding-right: 36px;
}

/* ruler */
.timeline {
  height: 39px;
  border-top: 1px solid #fff;
  border-bottom: 3px solid #2a2a2a;
}

.timeline text {
  font: bold 18px "Liberation Sans", sans-serif;
  text-anchor: middle;
}

/* tracks */
.workspace {
  display: flex;
  flex: 1;
  min-height: 0;
  background: #a0a0a0;
}

.track-area {
  flex: 1;
  padding: 2px 3px 0 2px;
  border-right: 1px solid #fff;
}

.track {
  border: 1px solid #b6b484;
  background: #ece982;
  padding: 3px;
}

.track-body {
  display: flex;
  height: 440px;
  border: solid #000;
  border-width: 1px 4px 3px 1px;
}

.track-panel {
  flex: none;
  width: 143px;
  border-right: 2px solid #000;
  background: #cac8d8;
  font: 16px/24px "Liberation Sans", "Noto Sans CJK SC", sans-serif;
}

.track-head {
  display: flex;
  gap: 1px;
  height: 24px;
}

.track-head button {
  box-sizing: border-box;
  height: 23px;
  border: 1px solid #a0a0a8;
  border-top-color: #fff;
  border-left-color: #fff;
}

.close {
  display: flex;
  justify-content: center;
  align-items: center;
  width: 24px;
}

.name {
  display: flex;
  flex: 1;
  justify-content: space-between;
  align-items: center;
  padding: 0 5px 0 2px;
}

.format {
  height: 52px;
  margin: 0;
  padding-left: 5px;
  white-space: nowrap;
}

.mute {
  height: 23px;
}

.mute button {
  box-sizing: border-box;
  width: 66px;
  height: 23px;
  border: 1px solid #a0a0a8;
  border-top-color: #fff;
  border-left-color: #fff;
  line-height: 20px;
}

.gain {
  height: 42px;
  padding: 3px 0 0 17px;
  font-weight: 700;
  line-height: 20px;
}

.gain i {
  display: block;
  height: 8px;
  border-left: 1px solid #fff;
  border-bottom: 1px solid #a0a0a0;
}

.gain.pan {
  font-size: 14px;
  font-weight: 400;
}

.v-ruler {
  flex: none;
  width: 46px;
  background: #cac8d8;
  font: bold 18px/24px "Liberation Sans", sans-serif;
  text-align: center;
}

.waves {
  display: flex;
  flex: 1;
  flex-direction: column;
  gap: 10px;
  min-width: 0;
  background: linear-gradient(#000 1px, #a0a0a0 1px 9px, #000 9px) 0 215px / 100% 10px no-repeat;
}

.channel {
  height: 215px;
  background: #d6d6d6;
}

.channel svg {
  border-right: 1px solid #909090;
  background: #c0c0c0;
}

.v-scroll {
  display: flex;
  flex-direction: column;
  align-items: center;
  gap: 5px;
  width: 24px;
  padding: 7px 0 1px;
  background: #f0f0f0;
}

.v-scroll i {
  flex: 1;
  width: 22px;
  background: #cdcdcd;
}

.v-scroll svg:last-child {
  margin: 5px 0;
}

.h-scroll {
  display: flex;
  justify-content: space-between;
  align-items: center;
  height: 25px;
  padding: 0 32px 0 230px;
  border-top: 1px solid #fff;
}

.h-scroll i {
  width: 80%;
  height: 22px;
  background: #cdcdcd;
}

/* selection toolbar */
.selection-bar {
  display: flex;
  height: 83px;
  padding-left: 1px;
  border-top: 1px solid #a0a0a0;
  border-bottom: 1px solid #a0a0a0;
}

.field {
  display: flex;
  flex-direction: column;
  gap: 3px;
  margin-right: 11px;
  padding-top: 9px;
  white-space: nowrap;
}

.selection-bar .combo {
  height: 34px;
}

.field .caption,
.field label {
  height: 24px;
}

.rate {
  width: 144px;
  margin: 0 11px 0 2px;
}

.rate .combo {
  width: 120px;
}

.snap {
  width: 117px;
  margin: 0 9px;
}

.divider {
  width: 1px;
  height: 39px;
  margin-top: 33px;
  background: #a0a0a0;
}

.divider + .field:not(.snap) {
  margin-left: 9px;
}

.radios {
  display: flex;
  gap: 14px;
}

.radios label {
  display: flex;
  align-items: center;
  gap: 4px;
}

.radios input {
  box-sizing: border-box;
  width: 20px;
  height: 20px;
  border: 2px solid #555;
  border-radius: 50%;
  background: #fff;
  appearance: none;
}

.radios input:checked {
  background: radial-gradient(#333 5px, #fff 6px);
}

.time-control {
  display: flex;
  box-sizing: border-box;
  width: 225px;
  height: 32px;
  padding-left: 2px;
  border: 2px solid #808080;
  border-right-color: #fff;
  border-bottom-color: #fff;
  background: #c0c0c0;
  line-height: 30px;
}

.time-control span {
  text-align: center;
}

.time-control .digit {
  width: 15px;
  color: #2010c8;
}

.time-control .unit-h {
  width: 23px;
}

.time-control .unit-m {
  width: 27px;
}

.time-control .dot {
  width: 6px;
}

.time-control .unit-s {
  width: 14px;
  text-align: right;
}

.time-control button {
  display: flex;
  flex: 1;
  justify-content: center;
  align-items: center;
  border: 1px solid #888;
  border-top-color: #fff;
  border-left-color: #fff;
}

.statusbar {
  position: relative;
  display: flex;
  height: 30px;
  padding-left: 3px;
  line-height: 34px;
}

.hint {
  flex: 1;
}

.actual-rate {
  box-sizing: border-box;
  width: 243px;
  padding-left: 6px;
  border-left: 1px solid #d0d0d0;
}

.actual-rate b {
  padding-left: 2px;
  font-weight: 400;
}

.watermark {
  position: absolute;
  right: 10px;
  bottom: 7px;
  color: rgba(215, 215, 215, 0.8);
  font: 16px/20px "Liberation Sans", sans-serif;
}

/* track drop-down */
.track-menu {
  position: absolute;
  top: 266px;
  left: 32px;
  display: flex;
  flex-direction: column;
  box-sizing: border-box;
  width: 321px;
  padding: 3px 3px 6px;
  border: 1px solid #ccc;
  background: #f2f2f2;
  box-shadow: 5px 5px 4px rgba(0, 0, 0, 0.5);
}

.track-menu button {
  display: flex;
  align-items: center;
  height: 33px;
  padding-right: 14px;
  white-space: pre;
}

.track-menu button:disabled {
  color: #848484;
}

.track-menu .active {
  background: #91c9f7;
}

.track-menu .mark {
  width: 33px;
  height: 33px;
  margin-right: 15px;
}

.track-menu .checked .mark {
  background: radial-gradient(circle, #a0a0a0 4px, #e6e6e6 5px);
}

.track-menu svg {
  margin-left: auto;
}

.track-menu hr {
  width: 270px;
  height: 1px;
  margin: 5px 0 4px auto;
  border: 0;
  background: #d4d4d4;
}
</style>
